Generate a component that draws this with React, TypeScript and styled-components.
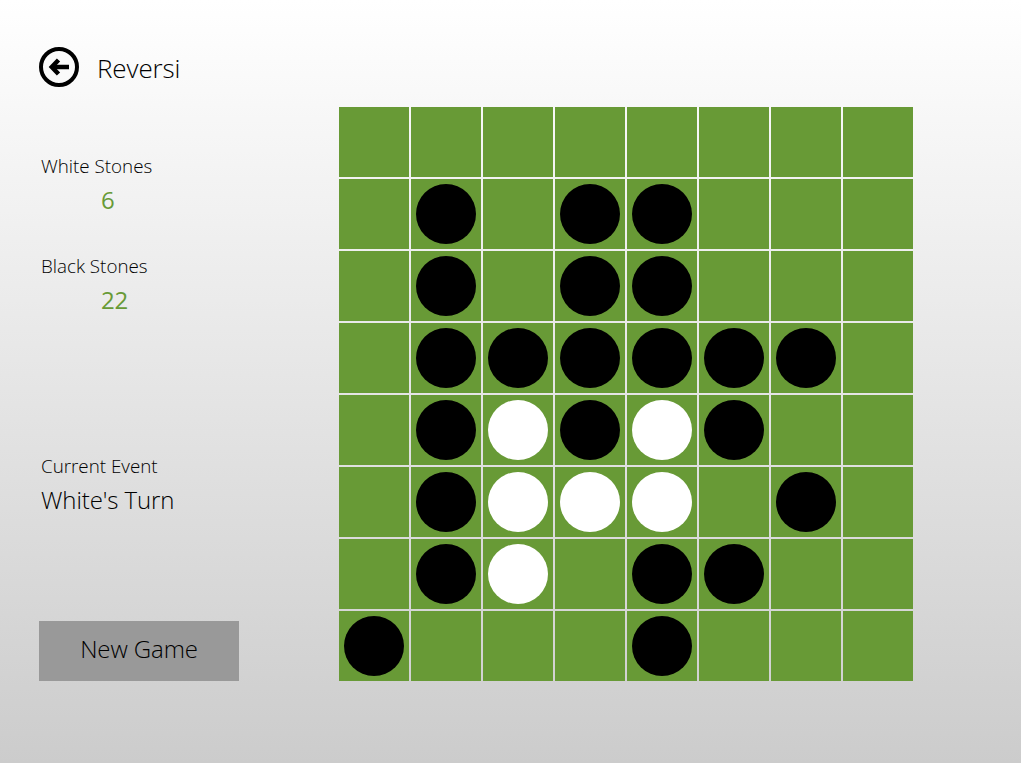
import styled, { createGlobalStyle } from 'styled-components';

type Stone = 'B' | 'W' | '-';

const rows = [
    '--------',
    '-B-BB---',
    '-B-BB---',
    '-BBBBBB-',
    '-BWBWB--',
    '-BWWW-B-',
    '-BW-BB--',
    'B---B---',
];

const GlobalStyle = createGlobalStyle`
  html, body {
    margin: 0;
    padding: 0;
    height: 100%;
  }

  body {
    font-family: "Open Sans", "Noto Sans", "Liberation Sans", sans-serif;
    font-weight: 300;
    color: #000;
  }
`;

const App = () => {
    const cells = rows.join('').split('') as Stone[];

    return (
        <Page>
            <GlobalStyle />
            <Header>
                <BackButton aria-label="Back">
                    <svg width="40" height="40" viewBox="0 0 40 40" fill="none" stroke="#000">
                        <circle cx="20" cy="20" r="18" strokeWidth="4" />
                        <path d="M30 20H13" strokeWidth="4.5" />
                        <path d="M19.5 13L12.8 20L19.5 27" strokeWidth="4.5" />
                    </svg>
                </BackButton>
                <Title>Reversi</Title>
            </Header>
            <Main>
                <Side>
                    <Stat>
                        <Label>White Stones</Label>
                        <Count>6</Count>
                    </Stat>
                    <Stat>
                        <Label>Black Stones</Label>
                        <Count>22</Count>
                    </Stat>
                    <EventBox>
                        <Label>Current Event</Label>
                        <EventText>White's Turn</EventText>
                    </EventBox>
                    <NewGame>New Game</NewGame>
                </Side>
                <Board>
                    {cells.map((stone, i) => (
                        <Cell key={i}>{stone !== '-' && <Disc $white={stone === 'W'} />}</Cell>
                    ))}
                </Board>
            </Main>
        </Page>
    );
};

const Page = styled.div`
  width: 100%;
  min-height: 100vh;
  box-sizing: border-box;
  padding: 47px 0 0 39px;
  background: linear-gradient(to bottom, #ffffff 0%, #cccccc 100%);
  overflow: hidden;
`;

const Header = styled.header`
  height: 40px;
  display: flex;
  align-items: center;
  gap: 18px;
  margin-bottom: 20px;
`;

const BackButton = styled.button`
  width: 40px;
  height: 40px;
  padding: 0;
  border: 0;
  background: none;
  display: block;

  svg {
    display: block;
  }
`;

const Title = styled.h1`
  margin: 1px 0 0;
  font-size: 26px;
  font-weight: 300;
  line-height: 40px;
  letter-spacing: -0.1px;
`;

const Main = styled.main`
  display: flex;
  align-items: flex-start;
`;

const Side = styled.aside`
  width: 300px;
  height: 574px;
  display: flex;
  flex-direction: column;
  box-sizing: border-box;
  padding: 46px 0 0 2px;
`;

const Stat = styled.div`
  height: 100px;
`;

const Label = styled.div`
  font-size: 18.8px;
  line-height: 26px;
`;

const Count = styled.div`
  margin: 7px 0 0 60px;
  font-size: 24px;
  line-height: 28px;
  font-weight: 400;
  letter-spacing: -0.3px;
  color: #689a36;
`;

const EventBox = styled.div`
  margin-top: 100px;
`;

const EventText = styled.div`
  margin-top: 5px;
  font-size: 24px;
  line-height: 32px;
  letter-spacing: -0.1px;
`;

const NewGame = styled.button`
  width: 200px;
  height: 60px;
  margin: auto 0 0 -2px;
  padding: 0 0 6px;
  border: 0;
  background: #999999;
  color: #000;
  font-family: inherit;
  font-weight: 300;
  font-size: 24px;
  letter-spacing: -0.1px;
`;

const Board = styled.section`
  display: grid;
  grid-template-columns: repeat(8, 70px);
  grid-auto-rows: 70px;
  gap: 2px;
`;

const Cell = styled.div`
  background: #689a36;
  display: flex;
  align-items: center;
  justify-content: center;
`;

const Disc = styled.div<{ $white: boolean }>`
  width: 60px;
  height: 60px;
  border-radius: 50%;
  background: ${({ $white }) => ($white ? '#fff' : '#000')};
`;

export default App;
